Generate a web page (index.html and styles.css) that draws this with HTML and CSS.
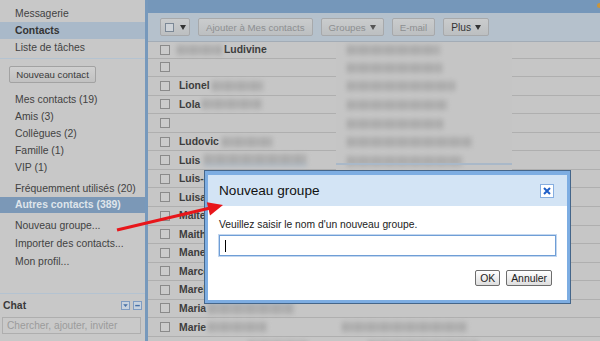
FILE: index.html
```html
<!DOCTYPE html>
<html lang="fr">
<head>
<meta charset="utf-8">
<title>Contacts - Nouveau groupe</title>
<link rel="stylesheet" href="styles.css">
</head>
<body>
<div class="page">
  <aside class="sidebar">
    <nav class="apps">
      <a class="nav">Messagerie</a>
      <a class="nav sel">Contacts</a>
      <a class="nav">Liste de tâches</a>
    </nav>
    <div class="sep"></div>
    <button class="newc">Nouveau contact</button>
    <ul class="groups">
      <li>Mes contacts (19)</li>
      <li>Amis (3)</li>
      <li>Collègues (2)</li>
      <li>Famille (1)</li>
      <li>VIP (1)</li>
    </ul>
    <ul class="others">
      <li>Fréquemment utilisés (20)</li>
      <li class="cur">Autres contacts (389)</li>
    </ul>
    <ul class="actions">
      <li>Nouveau groupe...</li>
      <li>Importer des contacts...</li>
      <li>Mon profil...</li>
    </ul>
    <div class="chat">
      <div class="chat-head">
        <span class="chat-title">Chat</span>
        <span class="chat-icons">
          <svg width="9" height="9" viewBox="0 0 9 9"><rect x=".5" y=".5" width="8" height="8" fill="#c7d2de" stroke="#7f9cc2"/><path d="M2.2 3.3h4.6L4.5 6z" fill="#4770a6"/></svg>
          <svg width="9" height="9" viewBox="0 0 9 9"><rect x=".5" y=".5" width="8" height="8" fill="#c7d2de" stroke="#7f9cc2"/><rect x="2.2" y="3.9" width="4.6" height="1.4" fill="#4770a6"/></svg>
        </span>
      </div>
      <div class="chat-input">Chercher, ajouter, inviter</div>
    </div>
  </aside>

  <main class="main">
    <div class="topbar"><span class="dot"></span></div>
    <div class="toolbar">
      <span class="tbtn cbbtn"><span class="tcb"></span><span class="caret"></span></span>
      <span class="tbtn dis">Ajouter à Mes contacts</span>
      <span class="tbtn dis">Groupes <span class="caret"></span></span>
      <span class="tbtn dis">E-mail</span>
      <span class="tbtn en">Plus <span class="caret"></span></span>
    </div>
    <div class="list">
      <div class="row"><span class="cb"></span><span class="blur w45 ml7"></span><b class="nm ml2">Ludivine</b></div>
      <div class="row"><span class="cb"></span></div>
      <div class="row"><span class="cb"></span><b class="nm">Lionel</b><span class="blur w52 ml2"></span></div>
      <div class="row"><span class="cb"></span><b class="nm">Lola</b><span class="blur w60 ml2"></span></div>
      <div class="row"><span class="cb"></span></div>
      <div class="row"><span class="cb"></span><b class="nm">Ludovic</b><span class="blur w51 ml3"></span></div>
      <div class="row"><span class="cb"></span><b class="nm">Luis</b><span class="blur w103 ml4 bl"></span></div>
      <div class="row"><span class="cb"></span><b class="nm">Luis-Alberto</b></div>
      <div class="row"><span class="cb"></span><b class="nm">Luisa</b></div>
      <div class="row"><span class="cb"></span><b class="nm">Maite</b></div>
      <div class="row"><span class="cb"></span><b class="nm">Maithé</b></div>
      <div class="row"><span class="cb"></span><b class="nm">Manel</b></div>
      <div class="row"><span class="cb"></span><b class="nm">Marco</b></div>
      <div class="row"><span class="cb"></span><b class="nm">Marek</b></div>
      <div class="row"><span class="cb"></span><b class="nm">Maria</b><span class="blur w86 ml2 bt"></span></div>
      <div class="row"><span class="cb"></span><b class="nm">Marie</b><span class="blur w59 ml2"></span><span class="blur w125 ml75"></span></div>
      <div class="row"><span class="cb"></span><b class="nm">Marie-Hélène</b><span class="blur w60 ml4"></span><span class="blur w110 ml60"></span></div>

      <div class="patch">
        <div class="pr"><span class="blur w93"></span></div>
        <div class="pr"><span class="blur w95"></span></div>
        <div class="pr"><span class="blur w108"></span></div>
        <div class="pr"><span class="blur w100"></span></div>
        <div class="pr"><span class="blur w96"></span></div>
        <div class="pr"><span class="blur w125"></span></div>
        <div class="pr"><span class="blur w115"></span></div>
        <div class="pr"><span class="blur w110"></span></div>
        <div class="pr"><span class="blur w105"></span></div>
        <div class="pr"><span class="blur w90"></span></div>
        <div class="pr"><span class="blur w80"></span></div>
        <span class="pline"></span>
      </div>
    </div>
  </main>
</div>

<div class="dialog">
  <div class="dlg-in">
    <div class="dlg-title">
      <span class="dlg-name">Nouveau groupe</span>
      <svg class="close" width="14" height="14" viewBox="0 0 14 14"><rect x=".5" y=".5" width="13" height="13" fill="#fff" stroke="#86aee0"/><path d="M4 4l6 6M10 4l-6 6" stroke="#1f5fc8" stroke-width="2"/></svg>
    </div>
    <div class="dlg-body">
      <p class="dlg-text">Veuillez saisir le nom d'un nouveau groupe.</p>
      <div class="dlg-input"><span class="caretline"></span></div>
      <div class="dlg-btns">
        <button class="dbtn">OK</button>
        <button class="dbtn">Annuler</button>
      </div>
    </div>
  </div>
</div>

<svg class="arrow" width="600" height="341" viewBox="0 0 600 341">
  <line x1="117" y1="230" x2="209" y2="208.3" stroke="#e8161b" stroke-width="3"/>
  <polygon points="223,205 206.8,202.2 210,215.6" fill="#e8161b"/>
</svg>
</body>
</html>
```

FILE: styles.css
```css
html, body {
  margin: 0;
  padding: 0;
}

body {
  width: 600px;
  height: 341px;
  overflow: hidden;
  position: relative;
  font-family: "Liberation Sans", Arial, sans-serif;
  font-size: 10.4px;
  color: #424242;
  background: #c8c8c8;
}

.page {
  display: flex;
  height: 341px;
}

/* ---------- sidebar ---------- */
.sidebar {
  width: 145px;
  flex: none;
  display: flex;
  flex-direction: column;
  background: #c8c8c8;
}

.apps {
  display: flex;
  flex-direction: column;
  padding-top: 4.5px;
}

.nav {
  height: 17px;
  line-height: 17px;
  padding-left: 15px;
  color: #424242;
}

.nav.sel {
  background: #a9b9c9;
  font-weight: bold;
  color: #343434;
}

.sep {
  height: 1px;
  margin-top: 2.5px;
  background: #b4c3d1;
}

.newc {
  align-self: flex-start;
  margin: 6.5px 0 0 9px;
  width: 87px;
  height: 17.5px;
  padding: 0;
  font-family: inherit;
  font-size: 9.7px;
  color: #3a3a3a;
  border: 1px solid #a2a2a2;
  border-radius: 2px;
  background: linear-gradient(#d0d0d0, #c1c1c1);
}

ul {
  list-style: none;
  margin: 0;
  padding: 0;
}

.groups {
  margin-top: 8px;
}

.groups li {
  height: 17px;
  line-height: 17px;
  padding-left: 15px;
}

.others {
  margin-top: 5px;
}

.others li {
  height: 16px;
  line-height: 16px;
  padding-left: 15px;
}

.others li.cur {
  background: #7b98b7;
  color: #dfe5eb;
  font-weight: bold;
}

.actions {
  margin-top: 4px;
}

.actions li {
  height: 18px;
  line-height: 18px;
  padding-left: 15px;
}

.chat {
  margin-top: auto;
  border-top: 1px solid #b4c3d1;
  padding-bottom: 7px;
}

.chat-head {
  height: 22px;
  display: flex;
  align-items: center;
  justify-content: space-between;
  padding: 0 3px 0 3px;
}

.chat-title {
  font-weight: bold;
  color: #3a3a3a;
}

.chat-icons {
  display: flex;
  gap: 3px;
  margin-top: 1px;
}

.chat-icons svg {
  display: block;
}

.chat-input {
  margin: 1px 0 0 2px;
  width: 139px;
  height: 17px;
  box-sizing: border-box;
  border: 1px solid #aeaeae;
  background: #c9c9c9;
  color: #9b9b9b;
  font-size: 10.2px;
  line-height: 15px;
  padding-left: 4px;
  white-space: nowrap;
}

/* ---------- main ---------- */
.main {
  flex: 1;
  display: flex;
  flex-direction: column;
  border-left: 3px solid #7799bc;
  background: #c6c6c6;
  min-width: 0;
}

.topbar {
  height: 13px;
  background: #7597ba;
  position: relative;
  flex: none;
}

.dot {
  position: absolute;
  right: -2px;
  top: 3px;
  width: 5px;
  height: 5px;
  border-radius: 50%;
  background: #c9953c;
}

.toolbar {
  height: 28px;
  flex: none;
  display: flex;
  align-items: center;
  gap: 8px;
  padding-left: 12px;
  background: #b5c1cc;
  border-bottom: 1px solid #a3acb6;
}

.tbtn {
  height: 18px;
  box-sizing: border-box;
  display: inline-flex;
  align-items: center;
  gap: 4px;
  padding: 0 7px;
  font-size: 9.7px;
  border: 1px solid #a7a9ab;
  border-radius: 2px;
  background: linear-gradient(#cacccd, #bcbfc1);
  white-space: nowrap;
}

.tbtn.dis {
  color: #8d8f91;
}

.tbtn.en {
  color: #333;
  font-size: 10.2px;
}

.cbbtn {
  width: 30px;
  padding: 0 0 0 4px;
  gap: 6px;
}

.tcb {
  width: 9px;
  height: 9px;
  box-sizing: border-box;
  border: 1px solid #7b8896;
  background: #ced3d8;
}

.caret {
  width: 0;
  height: 0;
  border-left: 3px solid transparent;
  border-right: 3px solid transparent;
  border-top: 5px solid #333;
}

.dis .caret {
  border-top-color: #555;
}

.list {
  flex: 1;
  position: relative;
  overflow: hidden;
}

.row {
  height: 18.55px;
  box-sizing: border-box;
  display: flex;
  align-items: center;
  padding-left: 12px;
  border-bottom: 1px solid #afafaf;
  white-space: nowrap;
}

.row:first-child {
  height: 16.6px;
}

.cb {
  flex: none;
  width: 10px;
  height: 10px;
  box-sizing: border-box;
  border: 1px solid #8a8a8a;
  background: #cbcbcb;
  margin-right: 9px;
}

.nm {
  font-weight: bold;
  color: #3d3d3d;
}

.blur {
  display: inline-block;
  flex: none;
  height: 10px;
  background: repeating-linear-gradient(90deg, #a3a3a3 0 5px, #b3b3b3 5px 7px, #a8a8a8 7px 11px, #b8b8b8 11px 13px);
  filter: blur(2.6px);
  opacity: 0.85;
}

.blur.bl {
  border-bottom: 2px solid #9fb3c8;
}

.blur.bt {
  border-top: 2px solid #9fb3c8;
}

.w45 { width: 45px; }
.w51 { width: 51px; }
.w52 { width: 52px; }
.w59 { width: 59px; }
.w60 { width: 60px; }
.w80 { width: 80px; }
.w86 { width: 86px; }
.w90 { width: 90px; }
.w93 { width: 93px; }
.w95 { width: 95px; }
.w96 { width: 96px; }
.w100 { width: 100px; }
.w103 { width: 103px; }
.w105 { width: 105px; }
.w108 { width: 108px; }
.w110 { width: 110px; }
.w115 { width: 115px; }
.w125 { width: 125px; }

.ml2 { margin-left: 2px; }
.ml3 { margin-left: 3px; }
.ml4 { margin-left: 4px; }
.ml7 { margin-left: -2px; }
.ml60 { margin-left: 60px; }
.ml75 { margin-left: 75px; }

.patch {
  position: absolute;
  left: 188px;
  top: 0;
  width: 176px;
  height: 194px;
  background: #c5c5c5;
  display: flex;
  flex-direction: column;
}

.pr {
  height: 18.55px;
  flex: none;
  display: flex;
  align-items: center;
  padding-left: 11px;
}

.pr:first-child {
  height: 16.6px;
}

.pline {
  position: absolute;
  left: 0;
  top: 121px;
  width: 176px;
  height: 2px;
  background: #a9b8c8;
  filter: blur(0.6px);
}

/* ---------- dialog ---------- */
.dialog {
  position: absolute;
  left: 204px;
  top: 170px;
  width: 367px;
  height: 134px;
  box-sizing: border-box;
  border: 1px solid #45668a;
}

.dlg-in {
  height: 100%;
  box-sizing: border-box;
  border: 3px solid #7dade2;
  border-top-width: 4px;
  background: #fff;
  display: flex;
  flex-direction: column;
}

.dlg-title {
  height: 31px;
  flex: none;
  display: flex;
  align-items: center;
  justify-content: space-between;
  padding: 0 13px 0 11px;
  background: #d3e4f5;
}

.dlg-name {
  font-size: 13.6px;
  color: #111;
}

.close {
  display: block;
}

.dlg-body {
  display: flex;
  flex-direction: column;
  padding: 0 11px;
}

.dlg-text {
  margin: 12px 0 0;
  height: 13px;
  line-height: 13px;
  font-size: 10.3px;
  color: #222;
}

.dlg-input {
  margin-top: 4px;
  height: 21px;
  box-sizing: border-box;
  border: 1px solid #6f9ed6;
  box-shadow: 0 0 0 1px #c3d7ef;
  display: flex;
  align-items: center;
  padding-left: 5px;
}

.caretline {
  width: 1px;
  height: 12px;
  background: #000;
}

.dlg-btns {
  margin-top: 14px;
  display: flex;
  justify-content: flex-end;
  gap: 6px;
  padding-right: 4px;
}

.dbtn {
  height: 16px;
  padding: 0 4px;
  font-family: inherit;
  font-size: 10.4px;
  color: #222;
  border: 1px solid #6d6d6d;
  border-radius: 2px;
  background: linear-gradient(#ffffff, #dedede);
}

/* ---------- annotation ---------- */
.arrow {
  position: absolute;
  left: 0;
  top: 0;
  pointer-events: none;
}
```
